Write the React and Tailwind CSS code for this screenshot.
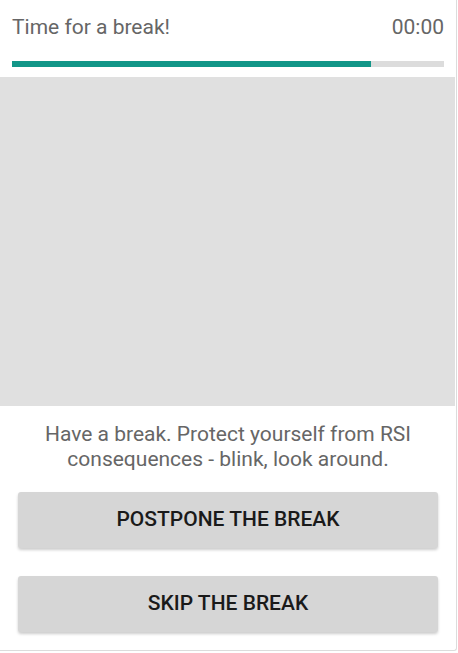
const BreakScreen = () => {
  const progress = 83;

  return (
    <div className="w-[458px] h-[653px] bg-white font-['Roboto',sans-serif]">
      <div className="w-[457px] h-[651px] bg-white border-r border-b border-[#dcdcdc] rounded-br-[3px] flex flex-col">
        {/* Header */}
        <div className="px-3 pt-[15px] h-[77px]">
          <div className="flex justify-between items-center text-[21px] leading-[24px] text-[#666]">
            <span>Time for a break!</span>
            <span>00:00</span>
          </div>
          <div className="mt-[22px] h-[6px] bg-[#dcdcdc]">
            <div className="h-full bg-[#129688]" style={{ width: progress + "%" }} />
          </div>
        </div>

        {/* Picture area */}
        <div className="h-[329px] w-[455px] bg-[#e0e0e0]" />

        {/* Message */}
        <p className="pt-[16px] text-center text-[21px] leading-[25px] text-[#666] px-2">
          Have a break. Protect yourself from RSI
          <br />
          consequences - blink, look around.
        </p>

        <div className="mt-[20px] px-[18px] w-[456px] flex flex-col gap-[28px]">
          <button className="h-[56px] w-[420px] bg-[#d6d6d6] rounded-[3px] shadow-[0_2px_3px_rgba(0,0,0,0.2)] text-[21px] font-medium text-[#1a1a1a]">
            POSTPONE THE BREAK
          </button>
          <button className="h-[56px] w-[420px] bg-[#d6d6d6] rounded-[3px] shadow-[0_2px_3px_rgba(0,0,0,0.2)] text-[21px] font-medium text-[#1a1a1a]">
            SKIP THE BREAK
          </button>
        </div>
      </div>
    </div>
  );
};

export default function App() {
  return <BreakScreen />;
}
